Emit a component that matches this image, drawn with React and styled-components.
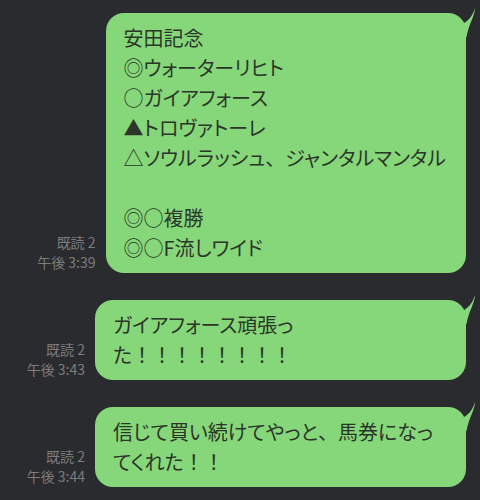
import React from "react";
import styled, { createGlobalStyle } from "styled-components";

const GlobalStyle = createGlobalStyle`
  html, body {
    margin: 0;
    padding: 0;
    background: #2a2b2e;
  }
  body {
    font-family: "Noto Sans CJK JP", "Noto Sans", sans-serif;
  }
`;

const Page = styled.div`
  width: 480px;
  height: 500px;
  box-sizing: border-box;
  padding: 13px 14px 0 0;
  display: flex;
  flex-direction: column;
  gap: 27px;
  overflow: hidden;
`;

const Row = styled.div`
  display: flex;
  justify-content: flex-end;
  align-items: flex-end;
  gap: 10px;
`;

const Meta = styled.div`
  display: flex;
  flex-direction: column;
  align-items: flex-end;
  margin-bottom: 1px;
  color: #7c7c7c;
  font-size: 14px;
  line-height: 20px;
  white-space: nowrap;
`;

const Bubble = styled.div`
  position: relative;
  box-sizing: border-box;
  width: ${(p) => (p.$width ? `${p.$width}px` : "auto")};
  padding: 10px 20px 10px 18px;
  background: #86d77a;
  border-radius: 18px;
  color: #2b3529;
  font-size: 20px;
  line-height: 30px;
  font-feature-settings: "palt";
  white-space: pre-wrap;
`;

const FullWidth = styled.span`
  font-feature-settings: normal;
`;

const Tail = styled.svg`
  position: absolute;
  top: -6px;
  right: -10px;
  width: 20px;
  height: 30px;
  overflow: visible;
`;

const BubbleTail = () => (
  <Tail viewBox="-10 -6 20 30">
    <path
      d="M -9 13 C -2 11.5, 6 6, 9 -5 C 8.5 4, 3 10, 0.5 24 L -9 24 Z"
      fill="#86d77a"
    />
  </Tail>
);

const renderText = (text) =>
  text.split(/([！、]+)/).map((part, i) =>
    /^[！、]+$/.test(part) ? <FullWidth key={i}>{part}</FullWidth> : part
  );

const messages = [
  {
    read: "既読 2",
    time: "午後 3:39",
    text:
      "安田記念\n◎ウォーターリヒト\n○ガイアフォース\n▲トロヴァトーレ\n△ソウルラッシュ、ジャンタルマンタル\n\n◎○複勝\n◎○F流しワイド",
  },
  {
    read: "既読 2",
    time: "午後 3:43",
    text: "ガイアフォース頑張っ\nた！！！！！！！！",
    width: 371,
  },
  {
    read: "既読 2",
    time: "午後 3:44",
    text: "信じて買い続けてやっと、馬券になっ\nてくれた！！",
    width: 371,
  },
];

export default function App() {
  return (
    <>
      <GlobalStyle />
      <Page>
        {messages.map((m, i) => (
          <Row key={i}>
            <Meta>
              <span>{m.read}</span>
              <span>{m.time}</span>
            </Meta>
            <Bubble $width={m.width}>
              {renderText(m.text)}
              <BubbleTail />
            </Bubble>
          </Row>
        ))}
      </Page>
    </>
  );
}
